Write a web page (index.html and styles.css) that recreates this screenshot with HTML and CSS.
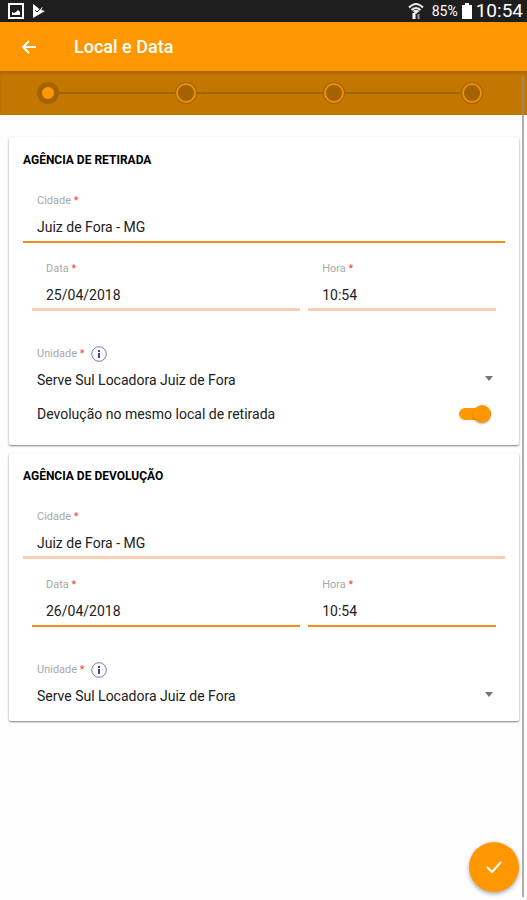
FILE: index.html
```html
<!DOCTYPE html>
<html lang="pt-BR">
<head>
  <meta charset="UTF-8" />
  <meta name="viewport" content="width=device-width, initial-scale=1.0" />
  <title>Local e Data</title>
  <link rel="stylesheet" href="styles.css">
</head>

<body>
<!-- Status bar -->
<div class="status-bar">
  <div class="status-icons">
    <svg width="16" height="16" viewBox="0 0 16 16">
      <rect x="1" y="1" width="14" height="14" fill="none" stroke="#fff" stroke-width="2" />
      <path d="M4 12V9l2 1 2-1 2-2 2 2v3z" fill="#fff" />
    </svg>
    <svg width="14" height="16" viewBox="0 0 14 16">
      <path d="M1 1l4 3 2 2 4-2-2 3 4 1-12 7z" fill="#fff" />
      <path d="M3 7l2 2 4-4" fill="none" stroke="#1e1e1e" stroke-width="1" />
    </svg>
  </div>
  <div class="status-info">
    <svg class="wifi-icon" width="16" height="18" viewBox="0 0 16 18">
      <path d="M1 5.500Q8-1.500 15 5.500M3.500 8Q8 4 12.500 8" fill="none" stroke="#e8e8e8" stroke-width="2" />
      <path d="M4.500 9Q8 6.500 11.500 9L8 12z" fill="#e8e8e8" />
      <path d="M6 11v6" fill="none" stroke="#fff" stroke-width="3" />
      <path d="M10.500 17v-5" fill="none" stroke="#999" stroke-width="2" />
    </svg>
    <span class="battery-text">85%</span>
    <svg width="10" height="16" viewBox="0 0 10 16">
      <path d="M3 0h4v2h3v14H0V2h3z" fill="#fff" />
    </svg>
    <span class="clock">10:54</span>
  </div>
</div>

<header class="app-bar">
  <button class="back-button" type="button" aria-label="Voltar">
    <svg width="16" height="16" viewBox="0 0 16 16">
      <path d="M15 8H2M8 2L2 8l6 6" fill="none" stroke="#fff" stroke-width="2" />
    </svg>
  </button>
  <h1>Local e Data</h1>
</header>

<!-- Steps -->
<div class="stepper">
  <span class="step step-active"></span>
  <span class="step-line"></span>
  <span class="step"></span>
  <span class="step-line step-line-wide"></span>
  <span class="step"></span>
  <span class="step-line"></span>
  <span class="step"></span>
</div>

<form class="page-content">
  <!-- Pickup -->
  <section class="card">
    <h2>AGÊNCIA DE RETIRADA</h2>
    <div class="field">
      <label for="pickup-city">Cidade <span class="required">*</span></label>
      <input id="pickup-city" type="text" value="Juiz de Fora - MG" />
    </div>
    <div class="field-row">
      <div class="field field-date field-light">
        <label for="pickup-date">Data <span class="required">*</span></label>
        <input id="pickup-date" type="text" value="25/04/2018" />
      </div>
      <div class="field field-time field-light">
        <label for="pickup-time">Hora <span class="required">*</span></label>
        <input id="pickup-time" type="text" value="10:54" />
      </div>
    </div>
    <div class="field field-unit">
      <div class="label-line">
        <label for="pickup-unit">Unidade <span class="required">*</span></label>
        <button class="info-button" type="button" aria-label="Informações">
          <svg width="16" height="16" viewBox="0 0 16 16">
            <circle cx="8" cy="8" r="7.300" fill="none" stroke="#7580a6" />
            <path d="M8 4v2M8 7v5" stroke="#3d4a80" stroke-width="2" />
          </svg>
        </button>
      </div>
      <div class="select-box">
        <select id="pickup-unit">
          <option>Serve Sul Locadora Juiz de Fora</option>
        </select>
      </div>
    </div>
    <div class="toggle-row">
      <label for="same-place">Devolução no mesmo local de retirada</label>
      <input id="same-place" class="toggle" type="checkbox" checked />
    </div>
  </section>

  <!-- Return -->
  <section class="card">
    <h2>AGÊNCIA DE DEVOLUÇÃO</h2>
    <div class="field field-light">
      <label for="return-city">Cidade <span class="required">*</span></label>
      <input id="return-city" type="text" value="Juiz de Fora - MG" />
    </div>
    <div class="field-row">
      <div class="field field-date">
        <label for="return-date">Data <span class="required">*</span></label>
        <input id="return-date" type="text" value="26/04/2018" />
      </div>
      <div class="field field-time">
        <label for="return-time">Hora <span class="required">*</span></label>
        <input id="return-time" type="text" value="10:54" />
      </div>
    </div>
    <div class="field field-unit">
      <div class="label-line">
        <label for="return-unit">Unidade <span class="required">*</span></label>
        <button class="info-button" type="button" aria-label="Informações">
          <svg width="16" height="16" viewBox="0 0 16 16">
            <circle cx="8" cy="8" r="7.300" fill="none" stroke="#7580a6" />
            <path d="M8 4v2M8 7v5" stroke="#3d4a80" stroke-width="2" />
          </svg>
        </button>
      </div>
      <div class="select-box">
        <select id="return-unit">
          <option>Serve Sul Locadora Juiz de Fora</option>
        </select>
      </div>
    </div>
  </section>

  <button class="confirm-button" type="submit" aria-label="Confirmar">
    <svg width="18" height="14" viewBox="0 0 18 14">
      <path d="M2 7l5 5L16 2" fill="none" stroke="#fff" stroke-width="2" />
    </svg>
  </button>
</form>

<div class="scroll-thumb"></div>
</body>
</html>
```

FILE: styles.css
```css
* {
  box-sizing: border-box;
}

body {
  margin: 0;
  background-color: #fefefe;
  color: #212121;
  font-family: Roboto, Arial, sans-serif;
  font-size: 14px;
}

button {
  padding: 0;
  border: none;
  background: none;
  cursor: pointer;
}

svg {
  display: block;
}

.status-bar {
  display: flex;
  justify-content: space-between;
  align-items: center;
  height: 22px;
  padding: 0 4px 0 8px;
  background-color: #1e1e1e;
  color: #ffffff;
}

.status-icons,
.status-info {
  display: flex;
  align-items: center;
}

.status-icons {
  gap: 8px;
}

.status-info {
  gap: 4px;
}

.wifi-icon {
  margin-right: 4px;
}

.battery-text {
  font-size: 14px;
}

.clock {
  font-size: 19px;
  line-height: 22px;
}

.app-bar {
  display: flex;
  align-items: center;
  gap: 37px;
  height: 49px;
  padding: 0 21px;
  background-color: #ff9800;
  color: #ffffff;
}

.app-bar h1 {
  margin: 0;
  font-size: 18px;
  font-weight: 500;
}

.stepper {
  display: flex;
  align-items: center;
  height: 44px;
  padding: 0 44px 0 37px;
  background-color: #c47700;
  box-shadow: inset 0 3px 2px #ae6a00;
}

.step {
  display: flex;
  align-items: center;
  justify-content: center;
  width: 22px;
  height: 22px;
  border-radius: 50%;
  background-color: #a36300;
}

.step::before {
  content: "";
  width: 16px;
  height: 16px;
  border: 2px solid #f08f00;
  border-radius: 50%;
}

.step-active::before {
  width: 12px;
  height: 12px;
  border: none;
  background-color: #ff9800;
}

.step-line {
  flex: 12;
  height: 2px;
  background-color: #a36300;
}

.step-line-wide {
  flex: 13;
}

.page-content {
  display: flex;
  flex-direction: column;
  gap: 8px;
  padding: 22px 8px 8px 9px;
}

.card {
  padding: 13px 14px 11px;
  border-radius: 2px;
  background-color: #ffffff;
  box-shadow: 0 1px 2px rgba(0, 0, 0, 0.5);
}

.card h2 {
  margin: 0 0 23px;
  font-size: 12px;
  font-weight: 700;
  line-height: 20px;
  color: #000000;
}

.field label {
  display: block;
  padding-left: 14px;
  font-size: 11px;
  line-height: 16px;
  color: #a8a8a8;
}

.field label .required {
  color: #f44336;
}

.field input,
.field select {
  display: block;
  width: 100%;
  height: 30px;
  margin-top: 4px;
  padding: 0 14px;
  border: none;
  border-bottom: 2px solid #f28c1e;
  border-radius: 0;
  background: transparent;
  color: #212121;
  font-family: inherit;
  font-size: 14px;
  appearance: none;
}

.field-light input {
  border-bottom: 3px solid #ffccb0;
}

.field-row {
  display: flex;
  gap: 8px;
  margin-top: 18px;
  padding: 0 9px;
}

.field-date {
  flex: 10;
}

.field-time {
  flex: 7;
}

.field-date,
.field-time {
  min-width: 0;
}

.field-unit {
  margin-top: 35px;
}

.label-line {
  display: flex;
  align-items: center;
  gap: 6px;
}

.field .select-box select {
  height: 28px;
  border-bottom: none;
}

.select-box {
  display: flex;
  align-items: center;
  padding-right: 12px;
}

.select-box::after {
  content: "";
  border: 4px solid transparent;
  border-top: 5px solid #757575;
  border-bottom: none;
}

.toggle-row {
  display: flex;
  align-items: center;
  justify-content: space-between;
  height: 40px;
  padding: 0 14px;
}

.toggle {
  display: flex;
  align-items: center;
  justify-content: flex-end;
  width: 32px;
  height: 12px;
  margin: 0;
  border-radius: 6px;
  background-color: #ff9800;
  appearance: none;
}

.toggle::before {
  content: "";
  flex: none;
  width: 18px;
  height: 18px;
  border-radius: 50%;
  background-color: #ff9800;
  box-shadow: 0 1px 2px rgba(0, 0, 0, 0.3);
}

.toggle:not(:checked) {
  justify-content: flex-start;
  background-color: #bdbdbd;
}

.confirm-button {
  position: fixed;
  right: 8px;
  bottom: 8px;
  display: flex;
  align-items: center;
  justify-content: center;
  width: 50px;
  height: 50px;
  border-radius: 50%;
  background-color: #ff9800;
  box-shadow: 0 2px 4px rgba(0, 0, 0, 0.35);
}

.scroll-thumb {
  position: fixed;
  top: 76px;
  right: 3px;
  bottom: 3px;
  width: 2px;
  background-color: rgba(140, 140, 140, 0.7);
}
```
